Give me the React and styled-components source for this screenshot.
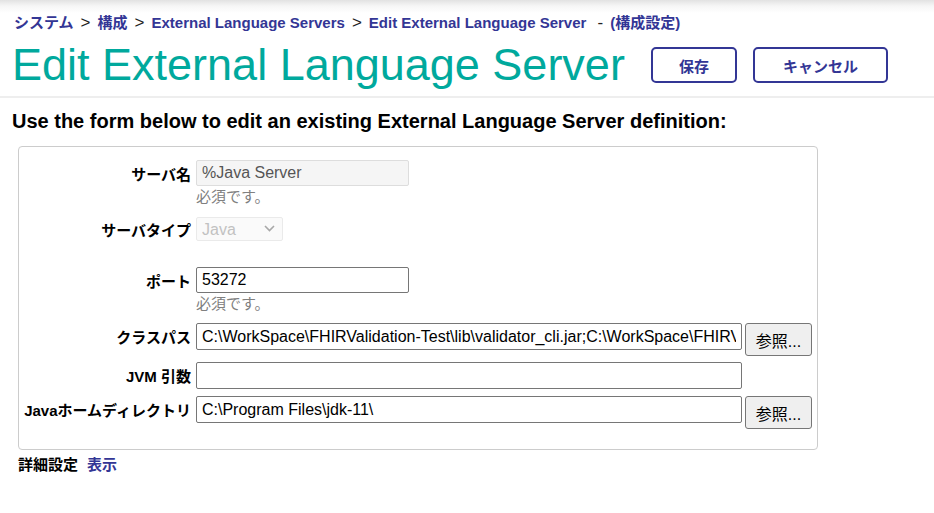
import React from 'react';
import styled, { createGlobalStyle } from 'styled-components';

const GlobalStyle = createGlobalStyle`
  body {
    margin: 0;
    background: #fff;
    font-family: "Liberation Sans", Arial, "Noto Sans CJK JP", sans-serif;
    color: #000;
  }
`;

const ink = '#333695';

const Header = styled.header`
  background: linear-gradient(to bottom, #e2e2e2 0, #f6f6f6 6px, #fff 13px);
  padding: 14px 0 5px 14px;
  border-bottom: 2px solid #eeeeee;
`;

const Crumbs = styled.div`
  height: 18px;
  font-size: 15px;
  line-height: 18px;
  font-weight: bold;
  color: ${ink};
  white-space: nowrap;
`;

const Sep = styled.span`
  color: #222;
  font-weight: normal;
  font-size: 17px;
  margin: 0 7px;
`;

const TitleRow = styled.div`
  display: flex;
  align-items: center;
  height: 52px;
  margin-top: 7px;
  margin-left: -2px;
`;

const Title = styled.h1`
  margin: 0;
  font-size: 45px;
  line-height: 52px;
  font-weight: normal;
  color: #00a99d;
  white-space: nowrap;
`;

const Actions = styled.div`
  display: flex;
  gap: 16px;
  margin-left: 26px;
`;

const HeadButton = styled.button`
  height: 36px;
  width: ${p => p.$w}px;
  background: #fff;
  border: 2px solid ${ink};
  border-radius: 5px;
  color: ${ink};
  font-family: inherit;
  font-size: 15px;
  font-weight: bold;
  cursor: pointer;
`;

const Page = styled.main`
  padding: 0 12px;
`;

const Intro = styled.h2`
  margin: 11px 0 0;
  height: 24px;
  font-size: 20px;
  line-height: 24px;
  font-weight: bold;
  white-space: nowrap;
`;

const Box = styled.section`
  width: 800px;
  box-sizing: border-box;
  margin: 13px 0 0 6px;
  border: 1px solid #cccccc;
  border-radius: 4px;
  padding: 13px 0 20px;
`;

const Row = styled.div`
  display: grid;
  grid-template-columns: 172px 1fr;
  column-gap: 5px;
  margin-top: ${p => p.$gap || 0}px;
`;

const Label = styled.label`
  height: ${p => p.$h || 27}px;
  display: flex;
  align-items: center;
  justify-content: flex-end;
  font-size: 15px;
  font-weight: bold;
  white-space: nowrap;
`;

const Field = styled.div`
  display: flex;
  align-items: flex-start;
  column-gap: 3px;
  flex-wrap: wrap;
`;

const TextInput = styled.input`
  box-sizing: border-box;
  width: ${p => p.$w}px;
  height: ${p => p.$h || 27}px;
  padding: 0 5px;
  font-family: inherit;
  font-size: 16px;
  color: ${p => (p.disabled ? '#555' : '#000')};
  background: ${p => (p.disabled ? '#f5f5f5' : '#fff')};
  border: 1px solid ${p => (p.disabled ? '#dddddd' : '#767676')};
  border-radius: 2px;
  outline: none;
`;

const Help = styled.div`
  flex-basis: 100%;
  height: 18px;
  margin-top: 2px;
  font-size: 15px;
  line-height: 18px;
  color: #808080;
`;

const SelectWrap = styled.div`
  position: relative;
  width: 87px;
  height: 24px;
`;

const Select = styled.select`
  appearance: none;
  box-sizing: border-box;
  width: 100%;
  height: 100%;
  padding: 0 0 0 5px;
  font-family: inherit;
  font-size: 16px;
  color: #a8a8a8;
  background: #f8f8f8;
  border: 1px solid #e2e2e2;
  border-radius: 2px;
`;

const Chevron = styled.svg`
  position: absolute;
  right: 8px;
  top: 8px;
  pointer-events: none;
`;

const BrowseButton = styled.button`
  width: 67px;
  height: 33px;
  background: #efefef;
  border: 1px solid #767676;
  border-radius: 3px;
  font-family: inherit;
  font-size: 16px;
  color: #000;
  padding: 0;
`;

const Footer = styled.div`
  display: flex;
  gap: 9px;
  height: 18px;
  margin: 6px 0 0 6px;
  font-size: 15px;
  line-height: 18px;
  font-weight: bold;
`;

const FooterLink = styled.a`
  color: ${ink};
  text-decoration: none;
  cursor: pointer;
`;

const classPath =
  'C:\\WorkSpace\\FHIRValidation-Test\\lib\\validator_cli.jar;C:\\WorkSpace\\FHIRValidation-Test\\lib\\hapi.jar';

export default function App() {
  return (
    <>
      <GlobalStyle />
      <Header>
        <Crumbs>
          システム<Sep>&gt;</Sep>構成<Sep>&gt;</Sep>External Language Servers<Sep>&gt;</Sep>
          Edit External Language Server <Sep>-</Sep>(構成設定)
        </Crumbs>
        <TitleRow>
          <Title>Edit External Language Server</Title>
          <Actions>
            <HeadButton $w={86}>保存</HeadButton>
            <HeadButton $w={135}>キャンセル</HeadButton>
          </Actions>
        </TitleRow>
      </Header>

      <Page>
        <Intro>Use the form below to edit an existing External Language Server definition:</Intro>
        <Box>
          <Row>
            <Label $h={26}>サーバ名</Label>
            <Field>
              <TextInput $w={213} $h={26} disabled defaultValue="%Java Server" />
              <Help>必須です。</Help>
            </Field>
          </Row>

          <Row $gap={11}>
            <Label $h={24}>サーバタイプ</Label>
            <Field>
              <SelectWrap>
                <Select disabled defaultValue="Java">
                  <option>Java</option>
                </Select>
                <Chevron width="11" height="7" viewBox="0 0 11 7">
                  <path d="M1 1 L5.5 5.5 L10 1" fill="none" stroke="#a8a8a8" strokeWidth="1.6" />
                </Chevron>
              </SelectWrap>
            </Field>
          </Row>

          <Row $gap={26}>
            <Label $h={26}>ポート</Label>
            <Field>
              <TextInput $w={213} $h={26} defaultValue="53272" />
              <Help>必須です。</Help>
            </Field>
          </Row>

          <Row $gap={10}>
            <Label>クラスパス</Label>
            <Field>
              <TextInput $w={546} defaultValue={classPath} />
              <BrowseButton>参照...</BrowseButton>
            </Field>
          </Row>

          <Row $gap={6}>
            <Label>JVM 引数</Label>
            <Field>
              <TextInput $w={546} defaultValue="" />
            </Field>
          </Row>

          <Row $gap={7}>
            <Label>Javaホームディレクトリ</Label>
            <Field>
              <TextInput $w={546} defaultValue={'C:\\Program Files\\jdk-11\\'} />
              <BrowseButton>参照...</BrowseButton>
            </Field>
          </Row>
        </Box>
        <Footer>
          <span>詳細設定</span>
          <FooterLink>表示</FooterLink>
        </Footer>
      </Page>
    </>
  );
}
